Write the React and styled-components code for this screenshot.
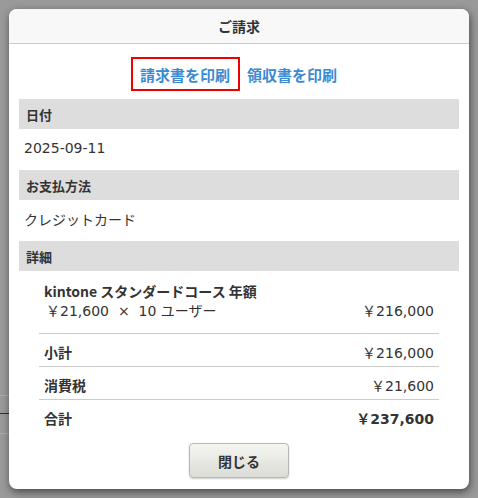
import React from "react";
import styled, { createGlobalStyle } from "styled-components";

const GlobalStyle = createGlobalStyle`
  html, body {
    margin: 0;
    padding: 0;
    width: 100%;
    height: 100%;
  }
  body {
    font-family: "Noto Sans CJK JP", "Noto Sans", sans-serif;
    color: #333;
    background-color: #9a9a9a;
    background-image:
      linear-gradient(#adadad, #adadad),
      linear-gradient(#2e2e2e, #2e2e2e),
      linear-gradient(#adadad, #adadad);
    background-size: 9px 1px;
    background-position: 0 395px, 0 413px, 0 433px;
    background-repeat: no-repeat;
  }
`;

const numberFont = `"DejaVu Sans", "Noto Sans CJK JP", sans-serif`;

const Overlay = styled.div`
  padding: 9px;
  display: flex;
  justify-content: center;
`;

const Dialog = styled.div`
  width: 460px;
  height: 480px;
  box-sizing: border-box;
  background: #fff;
  border-radius: 8px;
  box-shadow: 1px 3px 8px rgba(0, 0, 0, 0.55);
  overflow: hidden;
  display: flex;
  flex-direction: column;
`;

const Header = styled.div`
  height: 34px;
  flex-shrink: 0;
  display: flex;
  align-items: center;
  justify-content: center;
  background: #f8f8f8;
  border-bottom: 1px solid #cfcfcf;
  font-size: 14px;
  font-weight: bold;
  color: #333;
`;

const Body = styled.div`
  padding: 0 10px;
  display: flex;
  flex-direction: column;
`;

const PrintLinks = styled.div`
  display: flex;
  justify-content: center;
  padding: 13px 0 8px;
`;

const PrintLink = styled.a`
  display: flex;
  align-items: center;
  height: 34px;
  box-sizing: border-box;
  padding: 0 8px 0 7px;
  border: 2px solid ${(p) => (p.$active ? "#f00000" : "transparent")};
  font-size: 15px;
  font-weight: bold;
  color: #3a8bd3;
  text-decoration: none;
  cursor: pointer;
  margin-left: ${(p) => (p.$active ? "0" : "-2px")};
`;

const SectionBar = styled.div`
  height: 30px;
  display: flex;
  align-items: center;
  padding-left: 7px;
  background: #dddddd;
  font-size: 13px;
  font-weight: bold;
  color: #333;
`;

const SectionValue = styled.div`
  height: 41px;
  box-sizing: border-box;
  display: flex;
  align-items: center;
  padding: 0 0 3px 5px;
  font-family: ${numberFont};
  font-size: 14px;
  color: #333;
`;

const Details = styled.div`
  margin: 0 20px;
`;

const Item = styled.div`
  padding: 10px 5px 12px;
  border-bottom: 1px solid #cccccc;
  font-size: 14px;
  line-height: 20px;
`;

const ItemName = styled.div`
  font-weight: bold;
`;

const Line = styled.div`
  display: flex;
  justify-content: space-between;
  padding-left: 2px;
  font-family: ${numberFont};
`;

const SumRow = styled.div`
  height: 33px;
  box-sizing: border-box;
  padding: 4px 5px 0;
  display: flex;
  align-items: center;
  justify-content: space-between;
  font-size: 14px;
  border-bottom: 1px solid ${(p) => (p.$last ? "transparent" : "#cccccc")};
`;

const RowLabel = styled.span`
  font-weight: bold;
`;

const Amount = styled.span`
  font-family: ${numberFont};
  font-weight: ${(p) => (p.$strong ? "bold" : "normal")};
`;

const Footer = styled.div`
  display: flex;
  justify-content: center;
  padding-top: 10px;
`;

const CloseButton = styled.button`
  width: 100px;
  height: 35px;
  border: 1px solid #b8b8b4;
  border-radius: 4px;
  background: linear-gradient(#f5f5f2, #dcdcd6);
  box-shadow: 0 1px 2px rgba(0, 0, 0, 0.2);
  font-family: inherit;
  font-size: 14px;
  font-weight: bold;
  color: #333;
  cursor: pointer;
`;

const App = () => {
  return (
    <>
      <GlobalStyle />
      <Overlay>
        <Dialog>
          <Header>ご請求</Header>
          <Body>
            <PrintLinks>
              <PrintLink $active>請求書を印刷</PrintLink>
              <PrintLink>領収書を印刷</PrintLink>
            </PrintLinks>
            <SectionBar>日付</SectionBar>
            <SectionValue>2025-09-11</SectionValue>
            <SectionBar>お支払方法</SectionBar>
            <SectionValue>クレジットカード</SectionValue>
            <SectionBar>詳細</SectionBar>
            <Details>
              <Item>
                <ItemName>kintone スタンダードコース 年額</ItemName>
                <Line>
                  <span>￥21,600 &nbsp;× &nbsp;10 ユーザー</span>
                  <span>￥216,000</span>
                </Line>
              </Item>
              <SumRow>
                <RowLabel>小計</RowLabel>
                <Amount>￥216,000</Amount>
              </SumRow>
              <SumRow>
                <RowLabel>消費税</RowLabel>
                <Amount>￥21,600</Amount>
              </SumRow>
              <SumRow $last>
                <RowLabel>合計</RowLabel>
                <Amount $strong>￥237,600</Amount>
              </SumRow>
            </Details>
            <Footer>
              <CloseButton>閉じる</CloseButton>
            </Footer>
          </Body>
        </Dialog>
      </Overlay>
    </>
  );
};

export default App;
